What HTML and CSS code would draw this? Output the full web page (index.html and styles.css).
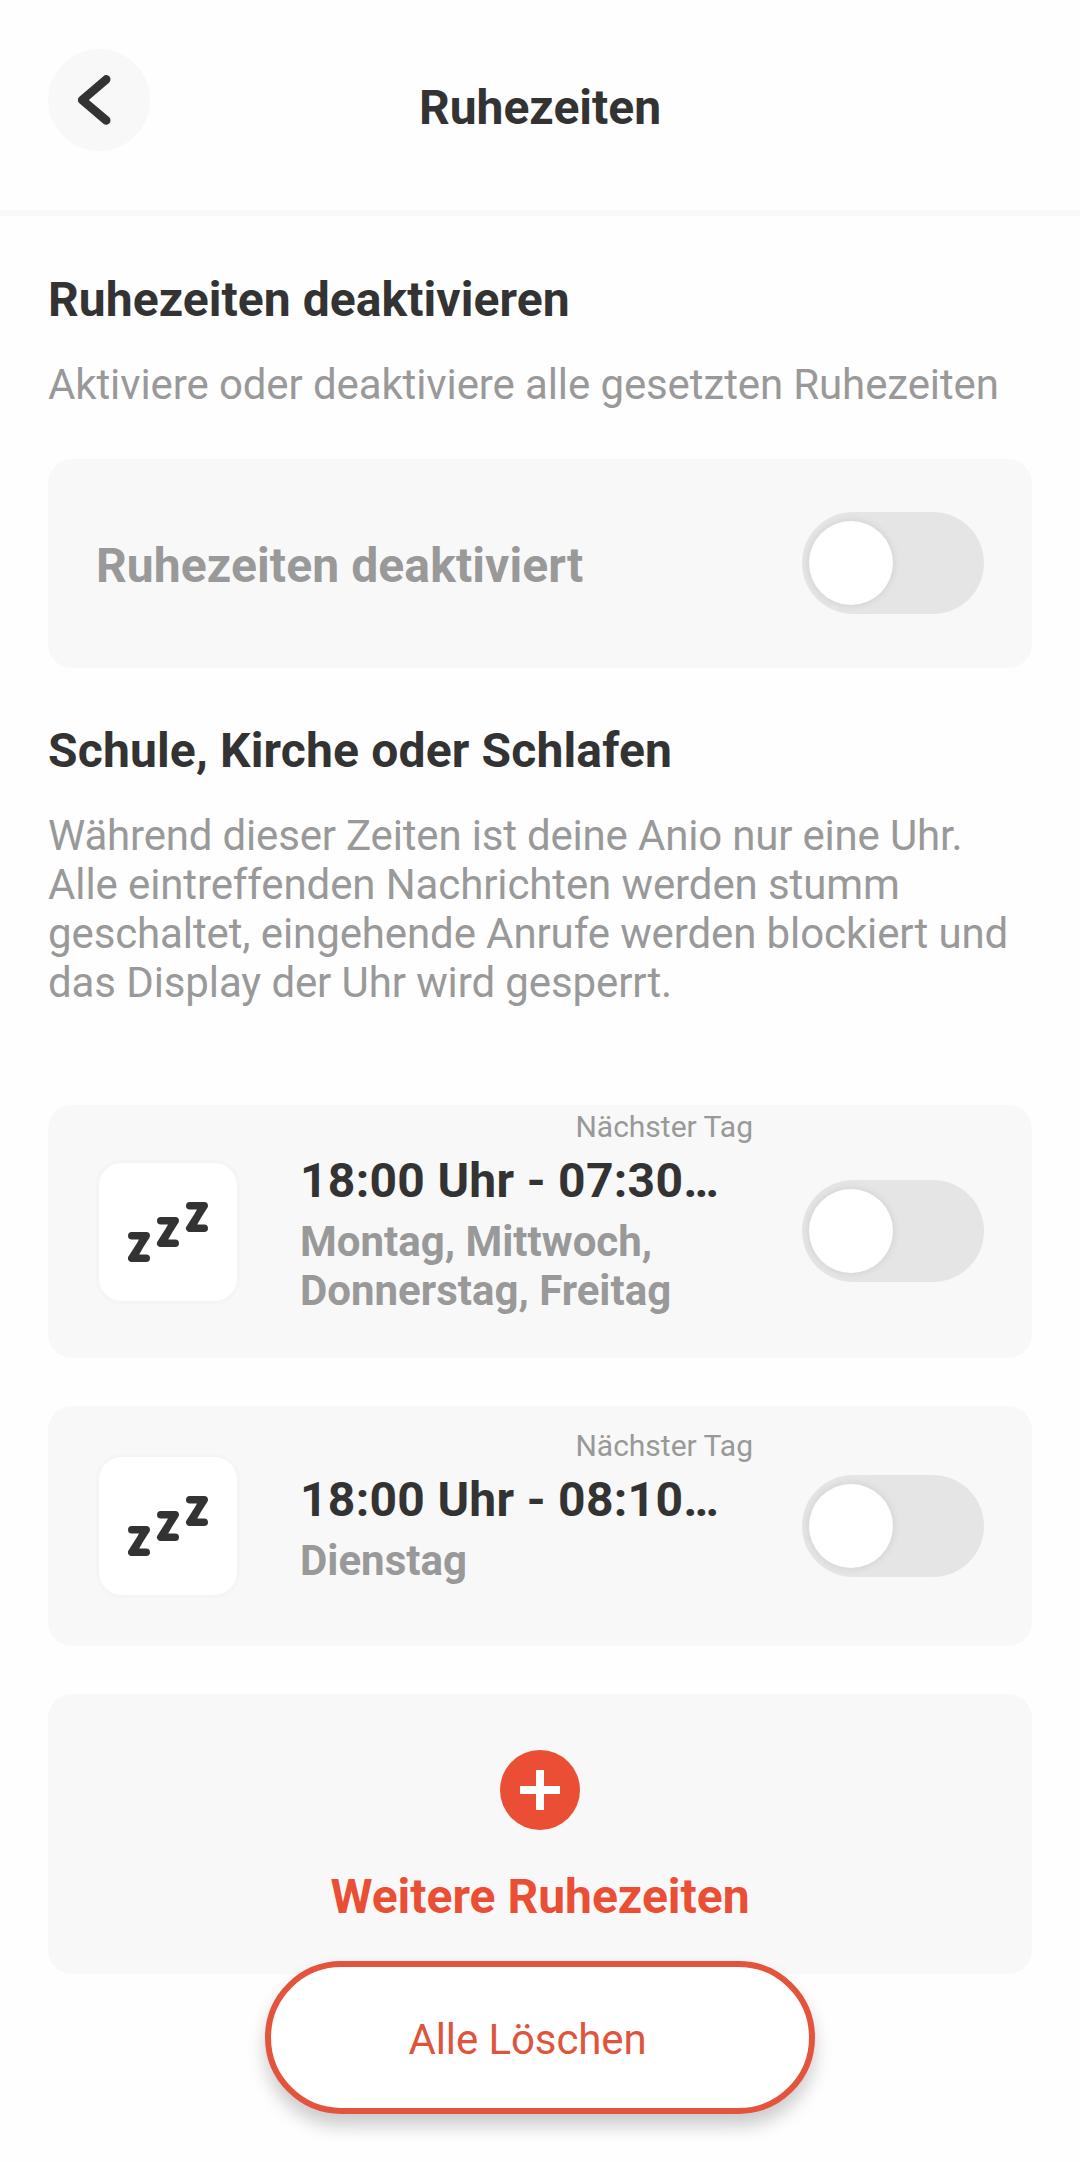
FILE: index.html
```html
<!DOCTYPE html>
<html lang="de">
<head>
<meta charset="utf-8">
<title>Ruhezeiten</title>
<link rel="stylesheet" href="styles.css">
</head>
<body>
<header class="topbar">
  <button class="back" aria-label="Zurück">
    <svg width="102" height="102" viewBox="0 0 102 102"><path d="M58.2 30.4 L34.2 51 L58.2 71.4" fill="none" stroke="#333" stroke-width="8.6" stroke-linecap="round" stroke-linejoin="round"/></svg>
  </button>
  <h1 class="title">Ruhezeiten</h1>
</header>
<main class="content">
  <h2 class="heading">Ruhezeiten deaktivieren</h2>
  <p class="text">Aktiviere oder deaktiviere alle gesetzten Ruhezeiten</p>
  <section class="card card-master">
    <span class="master-label">Ruhezeiten deaktiviert</span>
    <span class="toggle"><span class="knob"></span></span>
  </section>
  <h2 class="heading heading-second">Schule, Kirche oder Schlafen</h2>
  <p class="text"><span class="lead">Während dieser Zeiten ist deine Anio nur eine Uhr.</span><br>Alle eintreffenden Nachrichten werden stumm<br>geschaltet, eingehende Anrufe werden blockiert und<br>das Display der Uhr wird gesperrt.</p>
  <div class="list">
    <section class="card card-two-lines">
      <span class="tile"><svg width="80" height="60" viewBox="0 0 80 60"><g fill="none" stroke="#333" stroke-width="7.6" stroke-linecap="round" stroke-linejoin="round"><path d="M3.8 33.8H18.2L3.8 56.2H18.2M17 34.6L5.2 55.4"/><path d="M32.8 18.8H47.2L32.8 41.2H47.2M46 19.6L34.2 40.4"/><path d="M61.8 3.8H76.2L61.8 26.2H76.2M75 4.6L63.2 25.4"/></g></svg></span>
      <div class="info">
        <span class="next-day">Nächster Tag</span>
        <span class="time">18:00 Uhr - 07:30…</span>
        <span class="days">Montag, Mittwoch,<br>Donnerstag, Freitag</span>
      </div>
      <span class="toggle"><span class="knob"></span></span>
    </section>
    <section class="card card-one-line">
      <span class="tile"><svg width="80" height="60" viewBox="0 0 80 60"><g fill="none" stroke="#333" stroke-width="7.6" stroke-linecap="round" stroke-linejoin="round"><path d="M3.8 33.8H18.2L3.8 56.2H18.2M17 34.6L5.2 55.4"/><path d="M32.8 18.8H47.2L32.8 41.2H47.2M46 19.6L34.2 40.4"/><path d="M61.8 3.8H76.2L61.8 26.2H76.2M75 4.6L63.2 25.4"/></g></svg></span>
      <div class="info">
        <span class="next-day">Nächster Tag</span>
        <span class="time">18:00 Uhr - 08:10…</span>
        <span class="days">Dienstag</span>
      </div>
      <span class="toggle"><span class="knob"></span></span>
    </section>
    <section class="card card-add">
      <svg width="80" height="80" viewBox="0 0 80 80"><circle cx="40" cy="40" r="40" fill="#ea4e35"/><path d="M40 20V60M20 40H60" stroke="#fff" stroke-width="8"/></svg>
      <span class="add-label">Weitere Ruhezeiten</span>
    </section>
  </div>
</main>
<button class="delete-all">Alle Löschen</button>
</body>
</html>
```

FILE: styles.css
```css
* { box-sizing: border-box; }

body {
  position: relative;
  height: 2162px;
  margin: 0;
  overflow: hidden;
  background: #fefefe;
  color: #333;
  font-family: Roboto, sans-serif;
}

.topbar {
  display: grid;
  grid-template-columns: 102px 1fr 102px;
  align-items: start;
  height: 216px;
  padding: 49px 48px 0;
  border-bottom: 6px solid #f8f8f8;
}

.back {
  width: 102px;
  height: 102px;
  padding: 0;
  border: 0;
  border-radius: 50%;
  background: #f8f8f8;
}

.back svg { display: block; }

.title,
.heading {
  margin: 0;
  font-size: 48px;
  font-weight: 700;
  line-height: 56px;
}

.title {
  padding-top: 31px;
  text-align: center;
}

.content { padding: 56px 48px 0; }

.heading { letter-spacing: 0.06px; }

.heading-second {
  margin-top: 55px;
  letter-spacing: 0.16px;
}

.text {
  margin: 32px 0 0;
  color: #999;
  font-size: 42px;
  line-height: 49px;
  letter-spacing: -0.11px;
  white-space: nowrap;
}

.lead { letter-spacing: -0.18px; }

.card {
  display: flex;
  align-items: center;
  padding: 0 48px;
  border-radius: 24px;
  background: #f8f8f8;
}

.card-master {
  justify-content: space-between;
  height: 209px;
  margin-top: 50px;
}

.master-label {
  padding-top: 5px;
  color: #999;
  font-size: 48px;
  font-weight: 700;
  line-height: 56px;
  letter-spacing: 0.1px;
}

.toggle {
  flex: none;
  width: 182px;
  height: 102px;
  padding: 9px 7px;
  border-radius: 51px;
  background: #e5e5e5;
}

.card-master .toggle,
.card-two-lines .toggle { margin-bottom: 1px; }

.knob {
  display: block;
  width: 84px;
  height: 84px;
  border-radius: 50%;
  background: #fff;
  box-shadow: 0 0 8px rgba(0, 0, 0, 0.1);
}

.list {
  display: flex;
  flex-direction: column;
  gap: 48px;
  margin-top: 98px;
}

.card-two-lines { height: 253px; }
.card-one-line { height: 240px; }

.tile {
  display: grid;
  flex: none;
  place-items: center;
  width: 144px;
  height: 144px;
  border: 3px solid #f5f5f5;
  border-radius: 26px;
  background: #fff;
}

.info {
  display: flex;
  flex: 1;
  flex-direction: column;
  align-self: flex-start;
  margin-left: 60px;
  padding-top: 4px;
}

.card-one-line .info { padding-top: 22px; }

.next-day {
  align-self: flex-end;
  margin-right: 49px;
  color: #999;
  font-size: 30px;
  line-height: 35px;
}

.time {
  margin-top: 9px;
  font-size: 48px;
  font-weight: 700;
  line-height: 56px;
  letter-spacing: 0.3px;
  white-space: nowrap;
}

.days {
  margin-top: 8px;
  color: #999;
  font-size: 42px;
  font-weight: 700;
  line-height: 49px;
  white-space: nowrap;
}

.card-add {
  flex-direction: column;
  height: 280px;
  padding-top: 56px;
}

.add-label {
  margin-top: 39px;
  color: #ea4e35;
  font-size: 48px;
  font-weight: 700;
  line-height: 56px;
}

/* Floating action over the end of the list */
.delete-all {
  position: absolute;
  top: 1961px;
  left: 265px;
  width: 550px;
  height: 153px;
  padding: 3px 25px 0 0;
  border: 6px solid #e4533b;
  border-radius: 77px;
  background: #fff;
  box-shadow: 0 12px 18px rgba(0, 0, 0, 0.2);
  color: #df543d;
  font-family: inherit;
  font-size: 42px;
  line-height: 49px;
  letter-spacing: -0.1px;
}
```
